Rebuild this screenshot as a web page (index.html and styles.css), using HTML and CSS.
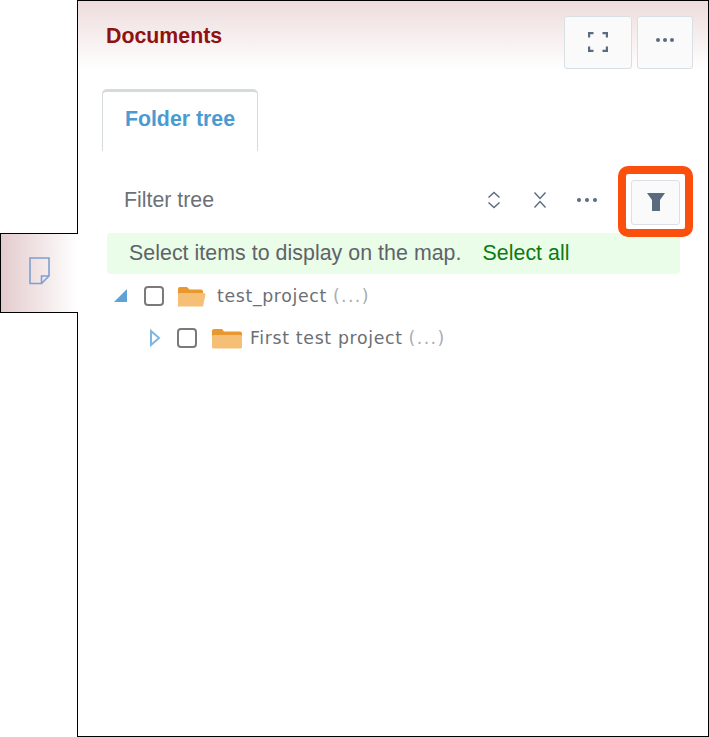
FILE: index.html
```html
<!DOCTYPE html>
<html lang="en">
<head>
<meta charset="utf-8">
<title>Documents</title>
<link rel="stylesheet" href="styles.css">
</head>
<body>
<div class="app">
  <div class="side-tab">
    <svg class="doc-icon" width="21" height="28" viewBox="0 0 21 28" fill="none" stroke="#7f9fcf" stroke-width="1.6">
      <path d="M1 1H20V19L12.500 26.500H1Z"/>
      <path d="M20 19H12.500V26.500" />
    </svg>
  </div>
  <main class="panel">
    <header class="head">
      <h1 class="title">Documents</h1>
      <div class="head-btns">
        <button class="btn btn-expand" aria-label="Fullscreen">
          <svg width="20" height="20" viewBox="0 0 20 20" fill="none" stroke="#5b6b7f" stroke-width="2.200">
            <path d="M1.100 5.500V1.100H5.500M14.500 1.100H18.900V5.500M18.900 14.500V18.900H14.500M5.500 18.900H1.100V14.500"/>
          </svg>
        </button>
        <button class="btn btn-more" aria-label="More">
          <svg width="20" height="6" viewBox="0 0 20 6" fill="#5b6b7f"><circle cx="3" cy="3" r="2"/><circle cx="10" cy="3" r="2"/><circle cx="17" cy="3" r="2"/></svg>
        </button>
      </div>
    </header>
    <nav class="tabs"><div class="tab">Folder tree</div></nav>
    <div class="toolbar">
      <span class="filter-label">Filter tree</span>
      <div class="tools">
        <svg class="tool tool-expand" width="14" height="18" viewBox="0 0 14 18" fill="none" stroke="#5b6b7f" stroke-width="1.400"><path d="M1.500 6.500L7 1.500L12.500 6.500M1.500 11.500L7 16.500L12.500 11.500"/></svg>
        <svg class="tool" width="14" height="18" viewBox="0 0 14 18" fill="none" stroke="#5b6b7f" stroke-width="1.400"><path d="M1.500 1.500L7 7.500L12.500 1.500M1.500 16.500L7 10.500L12.500 16.500"/></svg>
        <svg class="tool" width="22" height="6" viewBox="0 0 22 6" fill="#5b6b7f"><circle cx="3" cy="3" r="2"/><circle cx="11" cy="3" r="2"/><circle cx="19" cy="3" r="2"/></svg>
      </div>
      <div class="filter-ring">
        <button class="filter-btn" aria-label="Filter">
          <svg class="funnel" width="18" height="18" viewBox="0 0 18 18" fill="#5b6b7f"><path d="M0 0H18L13 7V18H5V7Z"/></svg>
        </button>
      </div>
    </div>
    <div class="notice">
      <span>Select items to display on the map.</span>
      <a class="select-all">Select all</a>
    </div>
    <ul class="tree">
      <li class="row">
        <svg class="arrow" width="14" height="14" viewBox="0 0 14 14"><path d="M0 13L13 0V13Z" fill="#5fa3d6"/></svg>
        <span class="check"></span>
        <svg class="folder folder-open" width="28" height="21" viewBox="0 0 28 21"><path d="M0 3A2 2 0 0 1 2 1H9L11.500 3.500H23A2 2 0 0 1 25 5.500V8H0Z" fill="#e8982f"/><path d="M0 20.500V8.500A1.500 1.500 0 0 1 1.500 7H26A1.500 1.500 0 0 1 27.500 8.500L25 20.500Z" fill="#f6bf76"/></svg>
        <span class="name">test_project</span><span class="count">(...)</span>
      </li>
      <li class="row row-child">
        <svg class="arrow-open" width="12" height="18" viewBox="0 0 12 18" fill="#fff" stroke="#7fb6e2" stroke-width="2"><path d="M2 2L10 9L2 16Z"/></svg>
        <span class="check"></span>
        <svg class="folder folder-closed" width="30" height="21" viewBox="0 0 30 21"><path d="M0 3A2 2 0 0 1 2 1H10L12 3.500H28A2 2 0 0 1 30 5.500V9H0Z" fill="#e8982f"/><path d="M0 19A1.500 1.500 0 0 0 1.500 20.500H28.500A1.500 1.500 0 0 0 30 19V8.500A1.500 1.500 0 0 0 28.500 7H1.500A1.500 1.500 0 0 0 0 8.500Z" fill="#f6bf76"/></svg>
        <span class="name">First test project</span><span class="count">(...)</span>
      </li>
    </ul>
  </main>
</div>
</body>
</html>
```
FILE: styles.css
```css
* { box-sizing: border-box; }
html, body { margin: 0; padding: 0; background: #fff; }
body { width: 709px; height: 737px; overflow: hidden; font-family: "Liberation Sans", Arial, sans-serif; }
.app { display: flex; width: 709px; height: 737px; }

.side-tab {
  width: 78px; height: 80px; margin-top: 233px; margin-right: -1px; position: relative; z-index: 1;
  border: 1px solid #000; border-right: 0;
  background: linear-gradient(to right, #e3cbcd, #fff);
  display: flex; align-items: center; justify-content: center;
  padding: 0 1px 4px 0;
}
.doc-icon { display: block; }

.panel { flex: 1; border: 1px solid #000; background: #fff; display: flex; flex-direction: column; min-width: 0; }

.head {
  height: 69px; flex: none; padding: 15px 15px 0 28px;
  display: flex; justify-content: space-between; align-items: flex-start;
  background: linear-gradient(to bottom, #eedcdc, #fff);
}
.title { margin: 8px 0 0; font-size: 21.33px; line-height: 24px; font-weight: 700; color: #8f1111; }
.head-btns { display: flex; gap: 5px; }
.btn {
  border: 1px solid #d8e0e6; border-radius: 3px; background: #fafafb;
  height: 53px; display: flex; align-items: center; justify-content: center;
  padding: 0 0 2px;
}
.btn-expand { width: 68px; }
.btn-more { width: 56px; padding: 0 0 5px; }

.tabs { padding: 19px 0 0 24px; flex: none; }
.tab {
  width: 156px; height: 62px; border: 1px solid #d5dadd; border-top: 3px solid #d5dadd; border-bottom: 0;
  border-radius: 5px 5px 0 0; color: #4a9bd1; font-size: 21.33px; font-weight: 700;
  text-align: center; padding-top: 14px; line-height: 26px;
}

.toolbar { display: flex; align-items: center; height: 71px; padding: 0 15px 0 46px; margin: 15px 0 -4px; flex: none; position: relative; z-index: 1; }
.filter-label { font-size: 21.33px; color: #6b7178; margin-top: -3px; }
.tools { display: flex; align-items: center; margin: -3px 20px 0 auto; gap: 29px; }
.tool { display: block; }
.tool-expand { margin-right: 3px; }
.filter-ring {
  width: 75px; height: 71px; border: 8px solid #fb4f0e; border-radius: 10px; background: #fff;
  padding: 6px 5px 4px 5px;
}
.filter-btn {
  width: 100%; height: 100%; margin: 0; padding: 0 0 2px; border: 1px solid #dcdfe3; border-radius: 3px; background: #fafafb;
  display: flex; align-items: center; justify-content: center;
}

.notice {
  margin: 0 28px 0 29px; height: 41px; flex: none; border-radius: 4px; background: #e9fde9;
  display: flex; align-items: center; padding-left: 22px; font-size: 21.33px; color: #5f6368;
  gap: 21px; letter-spacing: 0.05px;
}
.select-all { color: #0c7a12; }

.tree { list-style: none; margin: 0; padding: 1px 0 0; font-family: "DejaVu Sans", Verdana, sans-serif; font-size: 17.33px; letter-spacing: 0.65px; color: #6b6f75; }
.row { display: flex; align-items: center; height: 42px; padding-left: 36px; }
.row-child { padding-left: 71px; }
.arrow { margin-right: 16px; }
.arrow-open { margin-right: 16px; }
.check { width: 20px; height: 20px; border: 2px solid #7a7a7a; border-radius: 4px; background: #fff; flex: none; }
.folder { flex: none; }
.folder-open { margin: 0 11px 0 14px; }
.folder-closed { margin: 0 8px 0 15px; }
.count { color: #a9adb3; margin-left: 6px; letter-spacing: 1.4px; }
```
